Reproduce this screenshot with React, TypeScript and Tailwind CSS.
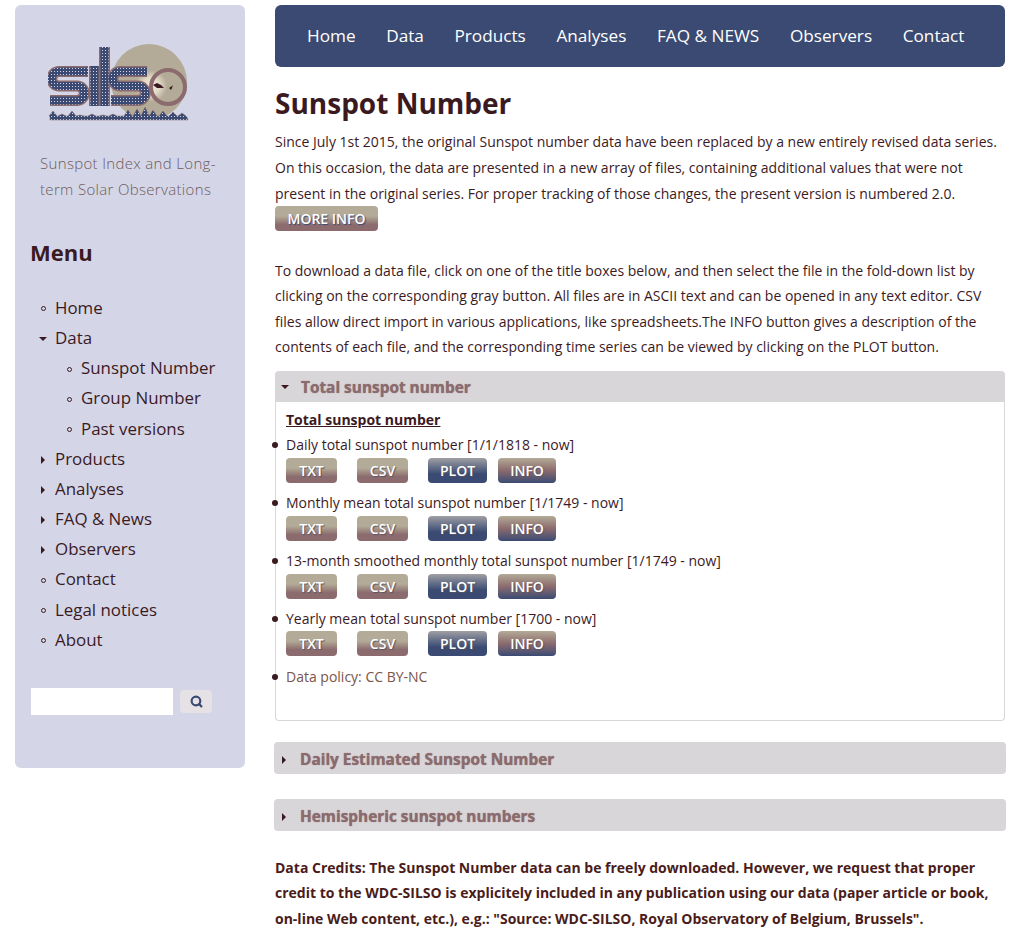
import { Search } from "lucide-react";

const navItems = ["Home", "Data", "Products", "Analyses", "FAQ & NEWS", "Observers", "Contact"];

const datasets = [
  "Daily total sunspot number [1/1/1818 - now]",
  "Monthly mean total sunspot number [1/1749 - now]",
  "13-month smoothed monthly total sunspot number [1/1749 - now]",
  "Yearly mean total sunspot number [1700 - now]",
];

// x position and tip height of the little flames along the bottom of the logo
const flames = [
  [5, 67], [14, 70], [24, 67], [32, 71], [44, 70], [55, 71], [65, 70],
  [80, 66], [89, 65], [97, 63], [105, 66], [115, 67], [125, 68], [134, 69],
];
const spikes =
  "M2 76L2 73" + flames.map(([x, y]) => `L${x - 4} 72L${x} ${y}L${x + 4} 72`).join("") + "L139 73L140 76Z";

const letters = [
  "M40 27.500H11a7.250 7.250 0 0 0 0 14.500H29a7.250 7.250 0 0 1 0 14.500H2",
  "M46.500 22V62",
  "M56.500 3V62",
  "M99 27.500H72a7.250 7.250 0 0 0 0 14.500H90a7.250 7.250 0 0 1 0 14.500H63",
];

const Logo = () => (
  <svg width="142" height="78" viewBox="0 0 142 78" className="block">
    <defs>
      <radialGradient id="burst" cx="103" cy="42" r="16" gradientUnits="userSpaceOnUse">
        <stop offset="0" stopColor="#f4efe2" />
        <stop offset="0.55" stopColor="#e0d8c4" />
        <stop offset="1" stopColor="#b3ab97" />
      </radialGradient>
      <clipPath id="sunclip">
        <rect x="0" y="0" width="142" height="74" />
      </clipPath>
      <pattern id="dots" width="3" height="3" patternUnits="userSpaceOnUse">
        <rect width="3" height="3" fill="#3a4a72" />
        <rect width="1" height="1" fill="#d4d6e8" />
      </pattern>
    </defs>
    <circle cx="101" cy="38" r="38" fill="url(#burst)" clipPath="url(#sunclip)" />
    <circle cx="120" cy="43" r="17" fill="none" stroke="#8b6b6e" strokeWidth="4" />
    <path d="M105 41l4-2 4 2 3 3-4 0-3 0z" fill="#3b1a1f" />
    <path d="M121 44l3-2 1-1-1 3-1 2z" fill="#3b1a1f" />
    <g fill="none" stroke="#8b6b6e" strokeWidth="11">
      {letters.map((d) => (
        <path key={d} d={d} />
      ))}
    </g>
    <g fill="none" stroke="url(#dots)" strokeWidth="8">
      {letters.map((d) => (
        <path key={d} d={d} />
      ))}
    </g>
    <path d={spikes} fill="url(#dots)" stroke="#8b6b6e" strokeWidth="0.5" />
  </svg>
);

const Bullet = ({ type }: { type: "dot" | "down" | "right" }) => {
  if (type === "down")
    return <span className="w-0 h-0 border-x-[4px] border-x-transparent border-t-[4px] border-t-[#3b1a1f]" />;
  if (type === "right")
    return <span className="w-0 h-0 border-y-[4px] border-y-transparent border-l-[4px] border-l-[#3b1a1f]" />;
  return <span className="w-[5px] h-[5px] rounded-full border border-[#3b1a1f]" />;
};

const MenuItem = ({ label, type, sub }: { label: string; type: "dot" | "down" | "right"; sub?: boolean }) => (
  <li className={`flex items-center h-[30.200px] ${sub ? "pl-[51px]" : "pl-[25px]"}`}>
    <span className="relative">
      <span className="absolute top-[9px] left-[-16px] w-[8px] h-[8px] flex items-center justify-center">
        <Bullet type={type} />
      </span>
      {label}
    </span>
  </li>
);

const FileButton = ({ label, className }: { label: string; className: string }) => (
  <button
    className={`h-[25px] rounded-[4px] text-[14px] leading-[25px] font-semibold text-white text-center [text-shadow:1px_1px_1px_#5a5560] ${className}`}
  >
    {label}
  </button>
);

const sand = "bg-gradient-to-b from-[#b3ab97] from-40% to-[#8b6b6e] to-75%";
const blue = "bg-gradient-to-b from-[#a09fa3] to-[#3a4a72] to-65%";
const rose = "bg-gradient-to-b from-[#b3ab97] via-[#8b6b6e] to-[#3a4a72]";

const Dataset = ({ label, last }: { label: string; last?: boolean }) => (
  <li className="relative">
    <span className="absolute left-[-14px] top-[7px] w-[6px] h-[6px] rounded-full bg-[#3b1a1f]" />
    <div className="leading-[20px] h-[20px]">{label}</div>
    <div className={`flex h-[25px] ${last ? "mt-[2px] mb-[11px]" : "mt-[3px] mb-[10px]"}`}>
      <FileButton label="TXT" className={`w-[51px] ${sand}`} />
      <FileButton label="CSV" className={`w-[51px] ml-[20px] ${sand}`} />
      <FileButton label="PLOT" className={`w-[59px] ml-[20px] ${blue}`} />
      <FileButton label="INFO" className={`w-[58px] ml-[11px] ${rose}`} />
    </div>
  </li>
);

const ClosedHeader = ({ label, className }: { label: string; className: string }) => (
  <div className={`ml-[-1px] mr-[-1px] h-[32px] pt-[4px] rounded-[4px] bg-[#d9d6d9] flex items-center pl-[8px] ${className}`}>
    <span className="w-[18px] flex">
      <Bullet type="right" />
    </span>
    <span className="text-[15.400px] font-bold text-[#8b6b6e] [text-shadow:0_0_1px_#8b6b6e]">{label}</span>
  </div>
);

export default function App() {
  return (
    <div
      className="h-[930px] overflow-hidden bg-white flex gap-[30px] pl-[15px] pt-[5px] text-[#3b1a1f]"
      style={{ fontFamily: '"Open Sans", sans-serif' }}
    >
      {/* Sidebar */}
      <aside className="w-[230px] h-[763px] shrink-0 rounded-[6px] bg-[#d4d6e8] pl-[15px]">
        <div className="pt-[39px] pl-[18px]">
          <Logo />
        </div>
        <p className="mt-[28px] ml-[10px] text-[15px] leading-[26px] font-light tracking-[0.33px] text-[#6e5a5c]">
          Sunspot Index and Long-
          <br />
          term Solar Observations
        </p>
        <h2 className="mt-[35px] text-[22px] leading-[30px] font-bold">Menu</h2>
        <ul className="mt-[25.700px] mb-[33.300px] text-[16.900px] leading-[24px]">
          <MenuItem label="Home" type="dot" />
          <MenuItem label="Data" type="down" />
          <MenuItem label="Sunspot Number" type="dot" sub />
          <MenuItem label="Group Number" type="dot" sub />
          <MenuItem label="Past versions" type="dot" sub />
          <MenuItem label="Products" type="right" />
          <MenuItem label="Analyses" type="right" />
          <MenuItem label="FAQ & News" type="right" />
          <MenuItem label="Observers" type="right" />
          <MenuItem label="Contact" type="dot" />
          <MenuItem label="Legal notices" type="dot" />
          <MenuItem label="About" type="dot" />
        </ul>
        <div className="flex items-center">
          <input className="ml-px w-[142px] h-[27px] bg-white outline-none" />
          <button className="ml-[7px] w-[32px] h-[23px] rounded-[4px] bg-[#e6e1e4] flex items-center justify-center">
            <Search size={13} strokeWidth={4} className="text-[#3a4a72]" />
          </button>
        </div>
      </aside>

      {/* Main */}
      <main className="w-[730px] shrink-0 text-[14px]">
        <nav className="h-[62px] rounded-[6px] bg-[#3a4a72] flex items-center gap-[30.600px] pl-[32px] text-[17.200px] font-medium text-white">
          {navItems.map((item) => (
            <span key={item}>{item}</span>
          ))}
        </nav>

        <h1 className="mt-[17px] text-[28px] leading-[38px] font-bold">Sunspot Number</h1>

        <p className="mt-[7px] leading-[25.750px]">
          Since July 1st 2015, the original Sunspot number data have been replaced by a new entirely revised data series.
          On this occasion, the data are presented in a new array of files, containing additional values that were not
          present in the original series. For proper tracking of those changes, the present version is numbered 2.0.
        </p>
        <button className="block w-[103px] h-[25px] rounded-[4px] bg-gradient-to-b from-[#b3ab97] from-40% to-[#8b6b6e] to-75% text-[14px] font-semibold text-white [text-shadow:1px_1px_1px_#3a4a72]">
          MORE INFO
        </button>

        <p className="mt-[26.500px] leading-[25.500px]">
          To download a data file, click on one of the title boxes below, and then select the file in the fold-down list
          by clicking on the corresponding gray button. All files are in ASCII text and can be opened in any text editor.
          CSV files allow direct import in various applications, like spreadsheets.The INFO button gives a description of
          the contents of each file, and the corresponding time series can be viewed by clicking on the PLOT button.
        </p>

        <section className="mt-[11px]">
          <div className="h-[31px] pt-[2px] rounded-t-[4px] bg-[#d9d6d9] flex items-center pl-[6px]">
            <span className="w-[20px] flex">
              <Bullet type="down" />
            </span>
            <span className="text-[15.400px] font-bold text-[#8b6b6e] [text-shadow:0_0_1px_#8b6b6e]">
              Total sunspot number
            </span>
          </div>
          <div className="h-[319px] border border-t-0 border-[#d9d6d9] rounded-b-[4px] pl-[10px] pt-[8px]">
            <h3 className="font-bold underline leading-[20px]">Total sunspot number</h3>
            <ul className="mt-[5px]">
              {datasets.map((label, i) => (
                <Dataset key={label} label={label} last={i === datasets.length - 1} />
              ))}
              <li className="relative leading-[20px] text-[#7a5548]">
                <span className="absolute left-[-14px] top-[7px] w-[6px] h-[6px] rounded-full bg-[#3b1a1f]" />
                Data policy: CC BY-NC
              </li>
            </ul>
          </div>
        </section>

        <ClosedHeader label="Daily Estimated Sunspot Number" className="mt-[21px]" />
        <ClosedHeader label="Hemispheric sunspot numbers" className="mt-[25px]" />

        <p className="mt-[24px] leading-[25.500px] font-bold text-[#4a1c1a]">
          Data Credits: The Sunspot Number data can be freely downloaded. However, we request that proper credit to the
          WDC-SILSO is explicitely included in any publication using our data (paper article or book, on-line Web content,
          etc.), e.g.: "Source: WDC-SILSO, Royal Observatory of Belgium, Brussels".
        </p>
      </main>
    </div>
  );
}
